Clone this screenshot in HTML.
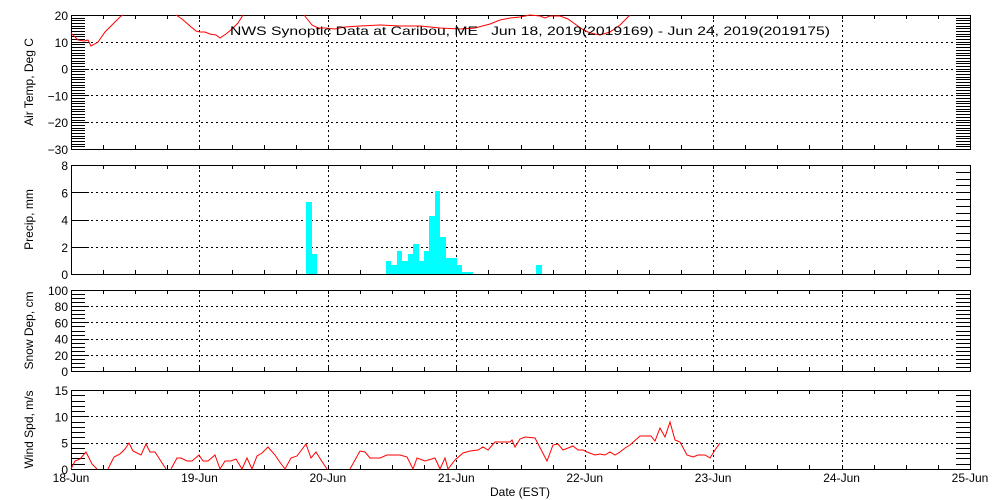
<!DOCTYPE html>
<html><head><meta charset="utf-8"><style>
html,body{margin:0;padding:0;background:#fff;width:1000px;height:500px;overflow:hidden}
svg{display:block}
text{font-family:"Liberation Sans",sans-serif;font-size:12px;fill:#000}
</style></head><body>
<svg id="s" width="1000" height="500" xmlns="http://www.w3.org/2000/svg" shape-rendering="crispEdges">
<g id="g"></g>
<g fill="#00ffff">
<rect x="306" y="202" width="6" height="72"/><rect x="312" y="254" width="5" height="20"/>
<rect x="386" y="261" width="5" height="13"/><rect x="391" y="265" width="6" height="9"/>
<rect x="397" y="251" width="5" height="23"/><rect x="402" y="261" width="6" height="13"/>
<rect x="408" y="254" width="5" height="20"/><rect x="413" y="244" width="6" height="30"/>
<rect x="419" y="261" width="5" height="13"/><rect x="424" y="251" width="5" height="23"/>
<rect x="429" y="216" width="6" height="58"/><rect x="435" y="191" width="5" height="83"/>
<rect x="440" y="237" width="6" height="37"/><rect x="446" y="258" width="5" height="16"/>
<rect x="451" y="258" width="6" height="16"/><rect x="457" y="265" width="5" height="9"/>
<rect x="462" y="272" width="11" height="2"/><rect x="536" y="265" width="6" height="9"/>
</g>
<g fill="none" stroke="#ff0000" stroke-width="1" shape-rendering="auto">
<polyline points="71,33 78,40 84,41 88,40 91,46 98,42 105,32 112,25 120,17 123,15"/>
<polyline points="176,15 182,19 190,26 196,31 200,32 205,32 210,34 216,35 220,38 226,34 232,29 238,23 243,15"/>
<polyline points="304,15 308,20 312,25 318,28 325,28 335,29 345,27 360,26 380,25 400,26 420,26 440,28 460,29 475,28 490,24 500,20 510,18 520,17 530,15 540,16 545,18 550,16 560,16 568,19 575,24 582,29 590,33 600,35 610,32 620,25 630,15"/>
<polyline points="71,469 75,461 80,459 86,452 92,464 97,469"/>
<polyline points="108,469 114,457 120,454 125,449 129,443 133,451 141,455 146,444 150,452 155,452 166,469"/>
<polyline points="171,469 177,458 181,458 187,461 192,461 199,455 203,461 208,461 215,455 220,469 225,461 231,461 236,459 242,469 247,458 252,469 257,456 262,453 268,447 275,455 279,461 285,469 291,458 297,456 306,444 311,458 316,452 321,460 327,469"/>
<polyline points="350,469 360,451 365,452 370,458 380,458 387,455 400,455 407,457 413,469 417,458 425,461 435,458 440,469 445,458 448,469 455,460 463,453 470,451 478,450 483,447 488,450 495,442 510,442 512,440 515,447 520,439 525,437 535,438 547,461 553,445 558,444 563,450 573,446 578,450 583,450 587,452 595,455 600,454 605,455 610,452 615,455 620,452 625,448 630,445 640,436 651,436 655,441 660,428 665,437 670,422 675,440 680,442 687,455 693,457 698,455 705,455 710,458 715,450 720,443"/>
</g>
<text x="230" y="35" textLength="600" lengthAdjust="spacingAndGlyphs" font-size="13" style="white-space:pre">NWS Synoptic Data at Caribou, ME   Jun 18, 2019(2019169) - Jun 24, 2019(2019175)</text>
<text x="520" y="496" text-anchor="middle" font-size="13">Date (EST)</text>
<g id="t"></g>
</svg>
<script>
var g=document.getElementById('g'),t=document.getElementById('t'),ns='http://www.w3.org/2000/svg';
function el(p,tag,a,txt){var e=document.createElementNS(ns,tag);for(var k in a)e.setAttribute(k,a[k]);if(txt!=null)e.textContent=txt;p.appendChild(e);return e;}
var L=71,R=970,dw=(R-L)/7;
var panels=[
 {top:15,bot:149,min:-30,max:20,maj:10,min_:1,left:true,title:'Air Temp, Deg C'},
 {top:165,bot:274,min:0,max:8,maj:2,min_:0.5,left:false,title:'Precip, mm'},
 {top:290,bot:371,min:0,max:100,maj:20,min_:5,left:true,title:'Snow Dep, cm'},
 {top:390,bot:469,min:0,max:15,maj:5,min_:1,left:true,title:'Wind Spd, m/s'}];
panels.forEach(function(p){
 var h=p.bot-p.top;function Y(v){return p.bot-(v-p.min)/(p.max-p.min)*h;}
 for(var d=1;d<7;d++){var x=Math.round(L+d*dw)+.5;el(g,'line',{x1:x,x2:x,y1:p.top,y2:p.bot,stroke:'#000','stroke-dasharray':'2,3'});}
 for(var v=p.min+p.maj;v<p.max;v+=p.maj){var y=Math.round(Y(v))+.5;el(g,'line',{x1:L,x2:R,y1:y,y2:y,stroke:'#000','stroke-dasharray':'2,3'});}
 for(var v=p.min;v<=p.max+1e-6;v+=p.min_){var y=Math.round(Y(v))+.5;
  el(g,'line',{x1:R-14,x2:R,y1:y,y2:y,stroke:'#000'});
  if(p.left)el(g,'line',{x1:L,x2:L+14,y1:y,y2:y,stroke:'#000'});}
 for(var v=p.min;v<=p.max+1e-6;v+=p.maj){var y=Y(v);
  el(g,'line',{x1:L,x2:L+18,y1:Math.round(y)+.5,y2:Math.round(y)+.5,stroke:'#000'});
  el(t,'text',{x:68,y:y+5,'text-anchor':'end','font-size':'13'},String(v).replace('-','\u2212'));}
 for(var i=1;i<28;i++){var x=Math.round(L+i*dw/4)+.5;el(g,'line',{x1:x,x2:x,y1:p.top,y2:p.top+4,stroke:'#000'});el(g,'line',{x1:x,x2:x,y1:p.bot-4,y2:p.bot,stroke:'#000'});}
 el(g,'rect',{x:L+.5,y:p.top+.5,width:R-L,height:h,fill:'none',stroke:'#000'});
 var cy=(p.top+p.bot)/2;el(t,'text',{x:0,y:0,'text-anchor':'middle',transform:'translate(33,'+cy+') rotate(-90)','font-size':'14'},p.title);
});
var days=['18-Jun','19-Jun','20-Jun','21-Jun','22-Jun','23-Jun','24-Jun','25-Jun'];
days.forEach(function(d,i){el(t,'text',{x:L+i*dw,y:482,'text-anchor':'middle','font-size':'12'},d);});
</script>
</body></html>
